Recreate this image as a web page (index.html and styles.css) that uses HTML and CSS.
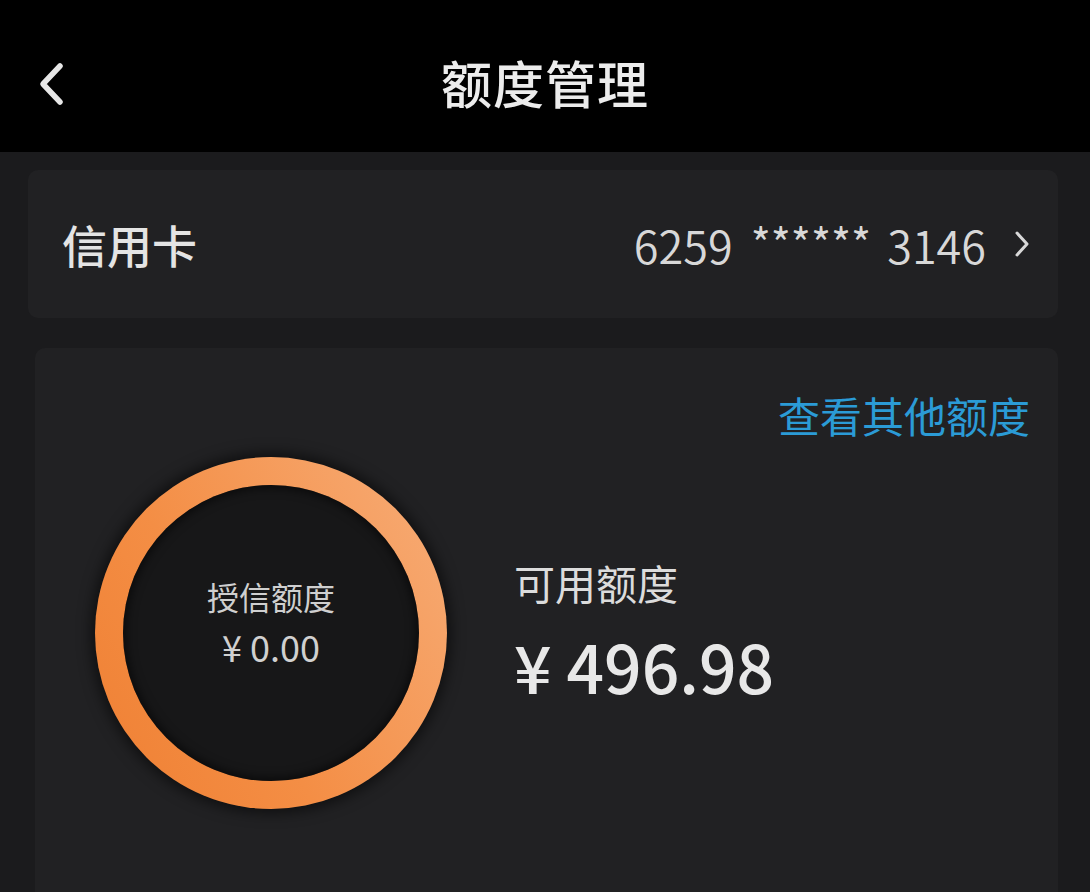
FILE: index.html
```html
<!DOCTYPE html>
<html lang="zh-CN">
<head>
<meta charset="utf-8">
<title>额度管理</title>
<link rel="stylesheet" href="styles.css">
</head>
<body>
<header class="topbar">
  <span class="back">
    <svg width="30" height="44" viewBox="0 0 30 44"><path d="M24 4 L7 22 L24 40" fill="none" stroke="#e6e6e6" stroke-width="5.5" stroke-linecap="round" stroke-linejoin="round"/></svg>
  </span>
  <h1 class="title">额度管理</h1>
</header>
<main class="content">
  <section class="card card-row">
    <span class="card-label">信用卡</span>
    <span class="card-num"><span class="num">6259</span><span class="stars">******</span><span class="num">3146</span><svg class="chev" width="16" height="30" viewBox="0 0 16 30"><path d="M3 4 L13 15 L3 26" fill="none" stroke="#d8d8d8" stroke-width="3" stroke-linecap="round" stroke-linejoin="round"/></svg></span>
  </section>
  <section class="card card-quota">
    <div class="other-link">查看其他额度</div>
    <div class="quota-body">
      <div class="ring">
        <div class="ring-inner">
          <div class="ring-label">授信额度</div>
          <div class="ring-value">¥ 0.00</div>
        </div>
      </div>
      <div class="avail">
        <div class="avail-label">可用额度</div>
        <div class="avail-value">¥ 496.98</div>
      </div>
    </div>
  </section>
</main>
</body>
</html>
```
FILE: styles.css
```css
* { box-sizing: border-box; }
html, body { margin: 0; padding: 0; }
body {
  width: 1090px;
  height: 892px;
  overflow: hidden;
  background: #1b1b1d;
  font-family: "Noto Sans CJK SC", "Noto Sans", sans-serif;
  color: #e6e6e6;
}
.topbar {
  height: 152px;
  background: #000;
  display: flex;
  align-items: center;
  justify-content: center;
  position: relative;
}
.back {
  position: absolute;
  left: 36px;
  top: 62px;
  display: block;
  line-height: 0;
}
.title {
  margin: 0;
  font-size: 51px;
  font-weight: 500;
  color: #ececec;
  letter-spacing: 1px;
  margin-top: 12px;
}
.content {
  padding: 18px 32px 0 28px;
  display: flex;
  flex-direction: column;
  gap: 30px;
}
.card {
  background: #212123;
  border-radius: 10px;
}
.card-row {
  height: 148px;
  display: flex;
  align-items: center;
  justify-content: space-between;
  padding: 0 28px 0 34px;
}
.card-label {
  font-size: 45px;
  font-weight: 500;
  color: #e4e4e4;
}
.card-num {
  display: flex;
  align-items: center;
  color: #d8d8d8;
}
.num {
  font-size: 45px;
  font-weight: 350;
  line-height: 1;
}
.stars {
  font-size: 43px;
  font-weight: 400;
  line-height: 1;
  margin: 0 16px 0 18px;
  position: relative;
  top: -3px;
}
.chev { margin-left: 28px; }
.card-quota {
  margin-left: 7px;
  height: 600px;
  padding: 40px 28px 0 60px;
  display: flex;
  flex-direction: column;
}
.other-link {
  align-self: flex-end;
  font-size: 42px;
  color: #2b9bd6;
  line-height: 1.3;
}
.quota-body {
  display: flex;
  align-items: center;
  margin-top: 14px;
}
.ring {
  width: 352px;
  height: 352px;
  border-radius: 50%;
  padding: 28px;
  background: linear-gradient(60deg, #ef7f32 0%, #f48e45 40%, #f7ad78 100%);
  box-shadow: 0 0 14px 4px rgba(0,0,0,0.55);
  flex: none;
}
.ring-inner {
  width: 100%;
  height: 100%;
  border-radius: 50%;
  background: #171718;
  box-shadow: inset 0 0 10px 3px rgba(0,0,0,0.55);
  display: flex;
  flex-direction: column;
  align-items: center;
  justify-content: center;
  padding-bottom: 26px;
}
.ring-label {
  font-size: 32px;
  color: #cfcfcf;
  line-height: 1.65;
}
.ring-value {
  font-size: 36px;
  font-weight: 400;
  color: #d0d0d0;
  line-height: 1.3;
}
.avail {
  margin-left: 67px;
  margin-top: 12px;
  display: flex;
  flex-direction: column;
}
.avail-label {
  font-size: 41px;
  color: #dcdcdc;
  line-height: 1.3;
}
.avail-value {
  font-size: 66px;
  font-weight: 500;
  color: #e8e8e8;
  line-height: 1.7;
}
```
